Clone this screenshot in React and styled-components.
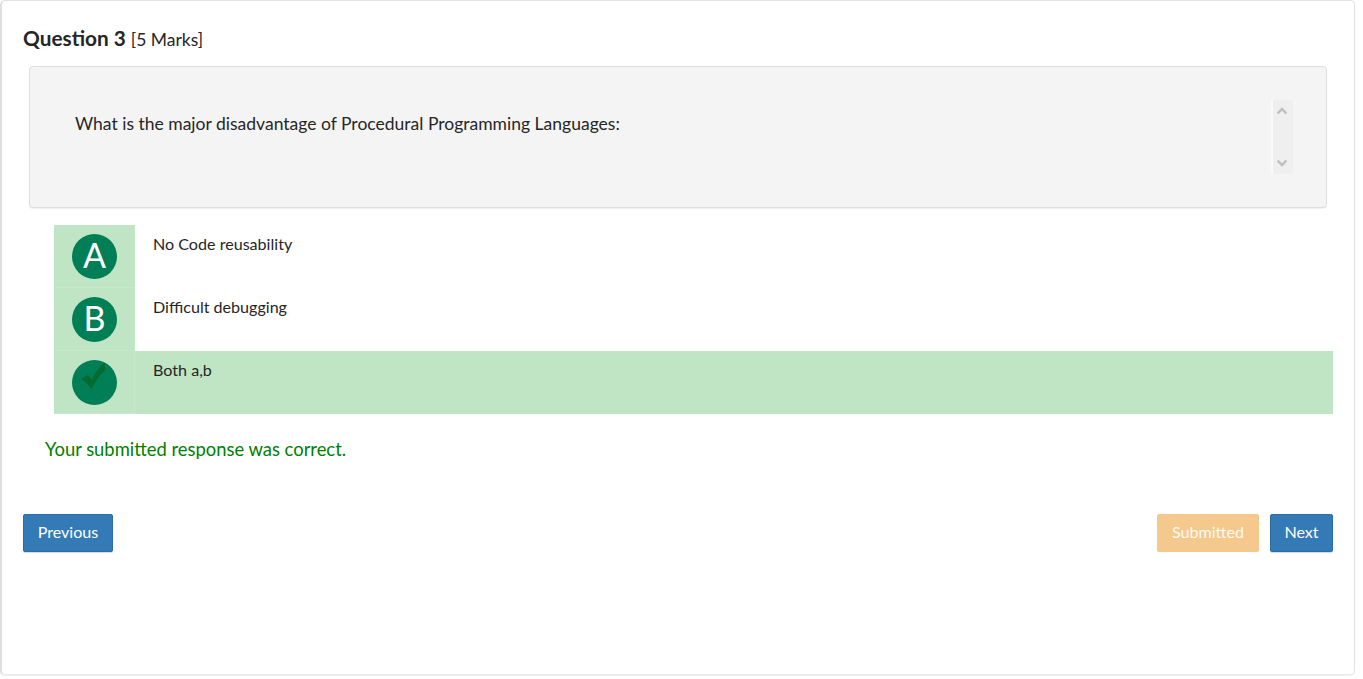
import React from 'react';
import styled, { createGlobalStyle } from 'styled-components';

const GlobalStyle = createGlobalStyle`
  * { box-sizing: border-box; }
  body {
    margin: 0;
    background: #fff;
    color: #262626;
    font-family: Lato, "Liberation Sans", sans-serif;
    overflow: hidden;
  }
`;

const Panel = styled.main`
  width: 1355px;
  height: 676px;
  padding: 23px 21px 0 21px;
  border: 1px solid #e2e2e2;
  border-left: 2px solid #dfdfdf;
  border-bottom: 2px solid #ededed;
  border-radius: 5px;
`;

const Heading = styled.h1`
  display: flex;
  align-items: baseline;
  gap: 5px;
  margin: 0;
  height: 42px;
  line-height: 28px;
  font-size: 20.8px;
  font-weight: 700;
  white-space: nowrap;
`;

const Marks = styled.span`
  font-size: 17.5px;
  font-weight: 400;
`;

const QuestionBox = styled.section`
  display: flex;
  justify-content: space-between;
  align-items: flex-start;
  height: 142px;
  margin: 0 6px;
  padding: 33px 33px 0 45px;
  background: #f4f4f4;
  border: 1px solid #dfdfdf;
  border-radius: 4px;
  box-shadow: 0 1px 1px rgba(0, 0, 0, 0.06);
`;

const QuestionText = styled.p`
  margin: 12px 0 0;
  font-size: 17.52px;
  line-height: 24px;
  white-space: nowrap;
`;

const ScrollTrack = styled.div`
  display: flex;
  flex-direction: column;
  justify-content: space-between;
  align-items: center;
  width: 22px;
  height: 74px;
  padding: 7px 2px 7px 0;
  background: #efefef;
  border-left: 2px solid #fafafa;
`;

const Arrow = styled.svg`
  display: block;
  width: 10px;
  height: 8px;
  fill: none;
  stroke: #bebebe;
  stroke-width: 2.4;
  transform: ${({ $down }) => ($down ? 'rotate(180deg)' : 'none')};
`;

const Options = styled.ul`
  list-style: none;
  margin: 17px 0 0 31px;
  padding: 0;
`;

const Option = styled.li`
  display: flex;
  height: 63px;
  background: ${({ $correct }) => ($correct ? '#bfe5c4' : 'transparent')};
`;

const Marker = styled.div`
  display: flex;
  align-items: center;
  justify-content: center;
  width: 81px;
  background: #bfe5c4;
  border-right: 1px solid #c7e8cb;
  border-bottom: 1px solid #c7e8cb;
`;

const Disc = styled.div`
  display: flex;
  align-items: center;
  justify-content: center;
  width: 45px;
  height: 45px;
  border-radius: 50%;
  background: #007e55;
  color: #fff;
  font-size: 34px;
  line-height: 45px;
`;

const Letter = styled.span`
  padding: 0 0 3px 1px;
`;

const Tick = styled.svg`
  width: 45px;
  height: 45px;
`;

const OptionText = styled.div`
  padding: 8px 0 0 18px;
  font-size: 16.1px;
  line-height: 22px;
`;

const Feedback = styled.p`
  margin: 23px 0 0 22px;
  color: #008000;
  font-size: 18.4px;
  line-height: 24px;
`;

const Actions = styled.footer`
  display: flex;
  gap: 11px;
  margin-top: 53px;
`;

const Button = styled.button`
  width: ${({ $width }) => $width}px;
  height: 38px;
  padding: 0 0 2px;
  border: 1px solid ${({ $muted }) => ($muted ? '#f4c88b' : '#2e6da4')};
  border-radius: 2px;
  background: ${({ $muted }) => ($muted ? '#f5c98d' : '#337ab7')};
  box-shadow: ${({ $muted }) => ($muted ? 'none' : '0 1px 1px rgba(0, 0, 0, 0.16)')};
  color: ${({ $muted }) => ($muted ? '#fffaf2' : '#fff')};
  font: 400 16.1px/22px Lato, "Liberation Sans", sans-serif;

  &:first-child { margin-right: auto; }
`;

const options = [
  { letter: 'A', text: 'No Code reusability' },
  { letter: 'B', text: 'Difficult debugging' },
  { letter: 'C', text: 'Both a,b', correct: true },
];

const Chevron = ({ down }) => (
  <Arrow $down={down} viewBox="0 0 10 8" aria-hidden="true">
    <path d="M.6 6.5 5 2l4.400 4.500" />
  </Arrow>
);

export default function App() {
  return (
    <>
      <GlobalStyle />
      <Panel>
        <Heading>
          <span>Question 3</span>
          <Marks>[5 Marks]</Marks>
        </Heading>
        <QuestionBox>
          <QuestionText>What is the major disadvantage of Procedural Programming Languages:</QuestionText>
          <ScrollTrack>
            <Chevron />
            <Chevron down />
          </ScrollTrack>
        </QuestionBox>
        <Options>
          {options.map(({ letter, text, correct }) => (
            <Option key={letter} $correct={correct}>
              <Marker>
                <Disc>
                  {correct ? (
                    <Tick viewBox="0 0 45 45" role="img" aria-label="Correct">
                      <path fill="#006b30" d="m9 19 7-4 3.500 5C23 13 27 7 33 2.600V10.500C28 14 24 21 19.500 29 16 25 13 21 9 19Z" />
                    </Tick>
                  ) : (
                    <Letter>{letter}</Letter>
                  )}
                </Disc>
              </Marker>
              <OptionText>{text}</OptionText>
            </Option>
          ))}
        </Options>
        <Feedback>Your submitted response was correct.</Feedback>
        <Actions>
          <Button $width={90}>Previous</Button>
          <Button $width={102} $muted>Submitted</Button>
          <Button $width={63}>Next</Button>
        </Actions>
      </Panel>
    </>
  );
}
